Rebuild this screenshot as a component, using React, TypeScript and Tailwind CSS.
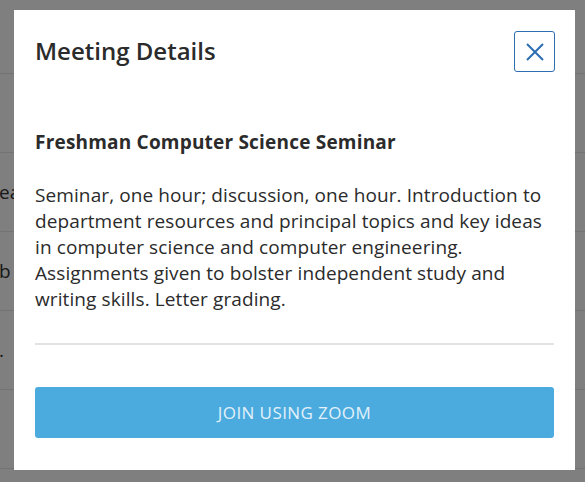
const rows = ["", "ea", "b", ".", ""];

export default function App() {
  return (
    <div className="relative h-[482px] w-[585px] overflow-hidden bg-white font-['Open_Sans',sans-serif]">
      {/* Page behind the dialog */}
      <div className="flex flex-col">
        <div className="h-[74px] border-b border-[#e6e6e6]" />
        {rows.map((t, i) => (
          <div key={i} className="flex h-[79px] items-center overflow-hidden whitespace-nowrap border-b border-[#e6e6e6]">
            <span className="ml-[-1px] text-[19px] text-[#333]">{t}</span>
          </div>
        ))}
      </div>

      {/* Overlay */}
      <div className="absolute inset-0 bg-black/50" />

      {/* Dialog */}
      <div className="absolute left-[14px] top-[10px] flex w-[561px] flex-col bg-white px-[21px] pb-[32px] pt-[21px] text-[#2b2b2b]">
        <div className="flex items-start justify-between">
          <h2 className="mt-[5px] text-[24px] font-semibold leading-[30px]">Meeting Details</h2>
          <button
            type="button"
            aria-label="Close"
            className="mr-[-1px] flex h-[41px] w-[41px] items-center justify-center rounded-[3px] border border-[#2d6db1] text-[#2d6db1]"
          >
            <svg viewBox="0 0 18 18" className="h-[18px] w-[18px]" fill="none" stroke="currentColor" strokeWidth={2}>
              <path d="M1 1L17 17M17 1L1 17" />
            </svg>
          </button>
        </div>

        <h3 className="mt-[58px] text-[19px] font-bold leading-[24px] tracking-[0.2px]">
          Freshman Computer Science Seminar
        </h3>
        <p className="mt-[28px] text-[19px] leading-[26px] tracking-[0.1px] text-[#2b2b2b]">
          Seminar, one hour; discussion, one hour. Introduction to department resources and principal topics and key ideas
          in computer science and computer engineering. Assignments given to bolster independent study and writing
          skills. Letter grading.
        </p>

        <div className="mt-[31px] h-[2px] bg-[#e3e3e3]" />

        <button
          type="button"
          className="mt-[42px] h-[51px] rounded-[3px] bg-[#4babdf] text-[17px] font-normal tracking-[0.4px] text-[#e2f1fa]"
        >
          JOIN USING ZOOM
        </button>
      </div>
    </div>
  );
}
